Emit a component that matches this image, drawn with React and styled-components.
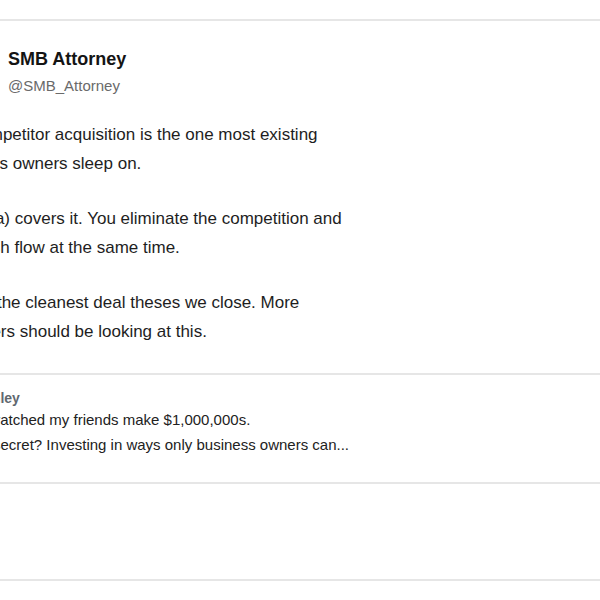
import React from "react";
import styled, { createGlobalStyle } from "styled-components";

const GlobalStyle = createGlobalStyle`
  html, body {
    margin: 0;
    padding: 0;
    background: #ffffff;
  }
  body {
    font-family: "Liberation Sans", Arial, sans-serif;
    overflow: hidden;
  }
`;

// the tweet is cropped on its left side, each line starts a little before the frame
const body = [
  [
    { text: "Competitor acquisition is the one most existing", cut: -33 },
    { text: "business owners sleep on.", cut: -59 },
  ],
  [
    { text: "SBA 7(a) covers it. You eliminate the competition and", cut: -58 },
    { text: "gain cash flow at the same time.", cut: -63 },
  ],
  [
    { text: "It's one of the cleanest deal theses we close. More", cut: -81 },
    { text: "buyers should be looking at this.", cut: -36 },
  ],
];

const card = [
  { text: "I watched my friends make $1,000,000s.", cut: -19 },
  { text: "The secret? Investing in ways only business owners can...", cut: -37 },
];

const App = () => (
  <>
    <GlobalStyle />
    <Page>
      <Tweet>
        <Header>
          <Name>SMB Attorney</Name>
          <Handle>@SMB_Attorney</Handle>
        </Header>
        <Body>
          {body.map((para, i) => (
            <Para key={i}>
              {para.map((line, j) => (
                <Line key={j} $cut={line.cut}>
                  {line.text}
                </Line>
              ))}
            </Para>
          ))}
        </Body>
        <Card>
          <CardTitle>Ashley</CardTitle>
          {card.map((line, i) => (
            <CardLine key={i} $cut={line.cut}>
              {line.text}
            </CardLine>
          ))}
        </Card>
        <Actions />
      </Tweet>
    </Page>
  </>
);

const Page = styled.div`
  width: 600px;
  height: 600px;
  overflow: hidden;
  padding-top: 19px;
  box-sizing: border-box;
`;

const Tweet = styled.article`
  border-top: 2px solid #e6e6e6;
  border-bottom: 2px solid #e6e6e6;
  display: flex;
  flex-direction: column;
`;

const Header = styled.header`
  display: flex;
  flex-direction: column;
  padding: 27px 0 0 8px;
  height: 82px;
  box-sizing: border-box;
`;

const Name = styled.div`
  font-size: 18px;
  font-weight: 700;
  color: #141414;
  line-height: 22px;
`;

const Handle = styled.div`
  font-size: 15px;
  color: #6a6a6a;
  line-height: 20px;
  margin-top: 6px;
`;

const Body = styled.div`
  display: flex;
  flex-direction: column;
  gap: 26px;
  padding: 17px 0 27px;
`;

const Para = styled.p`
  margin: 0;
  font-size: 17px;
  line-height: 29px;
  color: #1e1e1e;
`;

const Line = styled.span`
  display: block;
  white-space: nowrap;
  margin-left: ${(p) => p.$cut}px;
`;

const Card = styled.section`
  border-top: 2px solid #e6e6e6;
  border-bottom: 2px solid #e6e6e6;
  height: 111px;
  box-sizing: border-box;
  padding: 14px 0 0;
  display: flex;
  flex-direction: column;
`;

const CardTitle = styled.div`
  font-size: 14px;
  font-weight: 700;
  color: #5f6870;
  line-height: 18px;
  margin-left: -26px;
`;

const CardLine = styled.div`
  font-size: 15px;
  line-height: 25px;
  color: #222222;
  white-space: nowrap;
  margin-left: ${(p) => p.$cut}px;
`;

const Actions = styled.div`
  height: 95px;
`;

export default App;
